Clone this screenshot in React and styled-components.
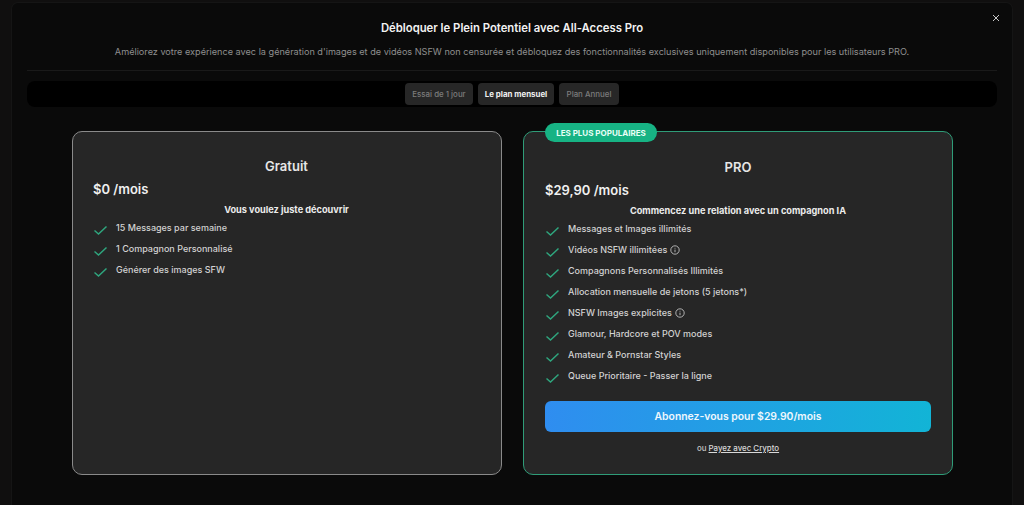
import React from 'react'
import styled, { createGlobalStyle } from 'styled-components'

const GlobalStyle = createGlobalStyle`
  html, body {
    margin: 0;
    height: 100%;
    background: #100f0f;
    overflow: hidden;
    font-family: Inter, "Liberation Sans", sans-serif;
  }
`

const Backdrop = styled.div`
  height: 505px;
  padding: 3px 12px 0;
  box-sizing: border-box;
  overflow: hidden;
`

const Dialog = styled.div`
  position: relative;
  height: 502px;
  box-sizing: border-box;
  padding: 16px 15px 0;
  background: #0a0a0a;
  border-radius: 6px 6px 0 0;
  box-shadow: 0 0 0 1px #151515;
`

const Close = styled.button`
  position: absolute;
  top: 10px;
  right: 11px;
  width: 10px;
  height: 10px;
  padding: 0;
  display: flex;
  background: none;
  border: 0;
  color: #c8c8c8;
`

const Title = styled.h2`
  margin: 0;
  height: 18px;
  line-height: 18px;
  font-size: 11.3px;
  font-weight: 600;
  color: #f2f2f2;
  text-align: center;
`

const Subtitle = styled.p`
  margin: 8px 0 0;
  height: 14px;
  line-height: 14px;
  font-size: 9.13px;
  color: #8f8f8f;
  text-align: center;
`

const Divider = styled.div`
  height: 1px;
  margin-top: 11px;
  background: #1a1a1a;
`

const Tabs = styled.div`
  display: flex;
  justify-content: center;
  gap: 5px;
  height: 26px;
  margin-top: 10px;
  padding: 2px 0;
  box-sizing: border-box;
  background: #000;
  border-radius: 8px;
`

const Tab = styled.div`
  width: ${p => p.$width}px;
  display: flex;
  align-items: center;
  justify-content: center;
  background: #272727;
  border-radius: 4px;
  font-size: 7.9px;
  font-weight: ${p => (p.$active ? 700 : 500)};
  color: ${p => (p.$active ? '#f0f0f0' : '#7c7c7c')};
`

const Cards = styled.div`
  display: flex;
  justify-content: center;
  gap: 21px;
  margin-top: 24px;
  padding-left: 1px;
`

const Card = styled.section`
  position: relative;
  width: 430px;
  height: 344px;
  box-sizing: border-box;
  padding: ${p => (p.$featured ? '27px 21px 0' : '26px 21px 0 20px')};
  background: #262626;
  border: 1px solid ${p => (p.$featured ? '#2f9c78' : '#8a8a8a')};
  border-radius: 10px;
`

const Badge = styled.div`
  position: absolute;
  top: -9px;
  left: 21px;
  width: 112px;
  height: 19px;
  display: flex;
  align-items: center;
  justify-content: center;
  background: #17b384;
  border-radius: 10px;
  font-size: 8px;
  font-weight: 700;
  color: #eafff7;
`

const PlanName = styled.h3`
  margin: 0;
  height: 16px;
  line-height: 16px;
  font-size: 13px;
  font-weight: 600;
  color: #e6e6e6;
  text-align: center;
`

const Price = styled.div`
  margin-top: 7px;
  height: 17px;
  line-height: 17px;
  font-size: 13px;
  font-weight: 600;
  color: #f0f0f0;
`

const Lead = styled.div`
  margin-top: 5px;
  height: 14px;
  line-height: 14px;
  font-size: 9.2px;
  font-weight: 700;
  color: #ececec;
  text-align: center;
`

const Features = styled.ul`
  list-style: none;
  margin: 4px 0 0;
  padding: 0;
  display: flex;
  flex-direction: column;
  gap: 7px;
`

const Feature = styled.li`
  display: flex;
  align-items: flex-start;
  height: 14px;
  line-height: 14px;
  font-size: 9px;
  font-weight: 500;
  color: #d2d2d2;
`

const Check = styled.svg`
  flex: none;
  width: 14px;
  height: 14px;
  margin: 2px 9px 0 0;
  color: #2fa67e;
`

const Info = styled.svg`
  flex: none;
  width: 10px;
  height: 10px;
  margin: 2px 0 0 3px;
  color: #d2d2d2;
`

const Subscribe = styled.button`
  display: block;
  width: 100%;
  height: 31px;
  margin-top: 18px;
  border: 0;
  border-radius: 6px;
  background: linear-gradient(90deg, #2f8df0, #12b4d6);
  font-family: inherit;
  font-size: 10.4px;
  font-weight: 600;
  color: #eef7fd;
`

const Alt = styled.div`
  margin-top: 10px;
  height: 12px;
  line-height: 12px;
  font-size: 7.9px;
  font-weight: 500;
  color: #c4c4c4;
  text-align: center;

  a {
    color: #d8d8d8;
    text-decoration: underline;
  }
`

const CheckIcon = () => (
  <Check viewBox="0 0 14 14" fill="none" stroke="currentColor" strokeWidth="1.5">
    <path d="M1.5 7.5 L5.5 11 L13.5 3.5" />
  </Check>
)

const InfoIcon = () => (
  <Info viewBox="0 0 10 10" fill="none" stroke="currentColor" strokeWidth="0.8">
    <circle cx="5" cy="5" r="4.2" />
    <path d="M5 4.6 V7.2 M5 2.8 V3.6" />
  </Info>
)

const plans = [
  {
    name: 'Gratuit',
    price: '$0 /mois',
    lead: 'Vous voulez juste découvrir',
    features: [
      { label: '15 Messages par semaine' },
      { label: '1 Compagnon Personnalisé' },
      { label: 'Générer des images SFW' },
    ],
  },
  {
    name: 'PRO',
    price: '$29,90 /mois',
    lead: 'Commencez une relation avec un compagnon IA',
    featured: true,
    features: [
      { label: 'Messages et Images illimités' },
      { label: 'Vidéos NSFW illimitées', info: true },
      { label: 'Compagnons Personnalisés Illimités' },
      { label: 'Allocation mensuelle de jetons (5 jetons*)' },
      { label: 'NSFW Images explicites', info: true },
      { label: 'Glamour, Hardcore et POV modes' },
      { label: 'Amateur & Pornstar Styles' },
      { label: 'Queue Prioritaire - Passer la ligne' },
    ],
  },
]

export default function App() {
  return (
    <Backdrop>
      <GlobalStyle />
      <Dialog>
        <Close aria-label="Fermer">
          <svg width="10" height="10" viewBox="0 0 10 10" fill="none" stroke="currentColor" strokeWidth="1">
            <path d="M2 2 L8 8 M8 2 L2 8" />
          </svg>
        </Close>
        <Title>Débloquer le Plein Potentiel avec All-Access Pro</Title>
        <Subtitle>
          Améliorez votre expérience avec la génération d'images et de vidéos NSFW non censurée et débloquez des fonctionnalités exclusives uniquement disponibles pour les utilisateurs PRO.
        </Subtitle>
        <Divider />
        <Tabs>
          <Tab $width={68}>Essai de 1 jour</Tab>
          <Tab $width={76} $active>Le plan mensuel</Tab>
          <Tab $width={60}>Plan Annuel</Tab>
        </Tabs>
        <Cards>
          {plans.map(plan => (
            <Card key={plan.name} $featured={plan.featured}>
              {plan.featured && <Badge>LES PLUS POPULAIRES</Badge>}
              <PlanName>{plan.name}</PlanName>
              <Price>{plan.price}</Price>
              <Lead>{plan.lead}</Lead>
              <Features>
                {plan.features.map(f => (
                  <Feature key={f.label}>
                    <CheckIcon />
                    {f.label}
                    {f.info && <InfoIcon />}
                  </Feature>
                ))}
              </Features>
              {plan.featured && (
                <>
                  <Subscribe>Abonnez-vous pour $29.90/mois</Subscribe>
                  <Alt>ou <a>Payez avec Crypto</a></Alt>
                </>
              )}
            </Card>
          ))}
        </Cards>
      </Dialog>
    </Backdrop>
  )
}
